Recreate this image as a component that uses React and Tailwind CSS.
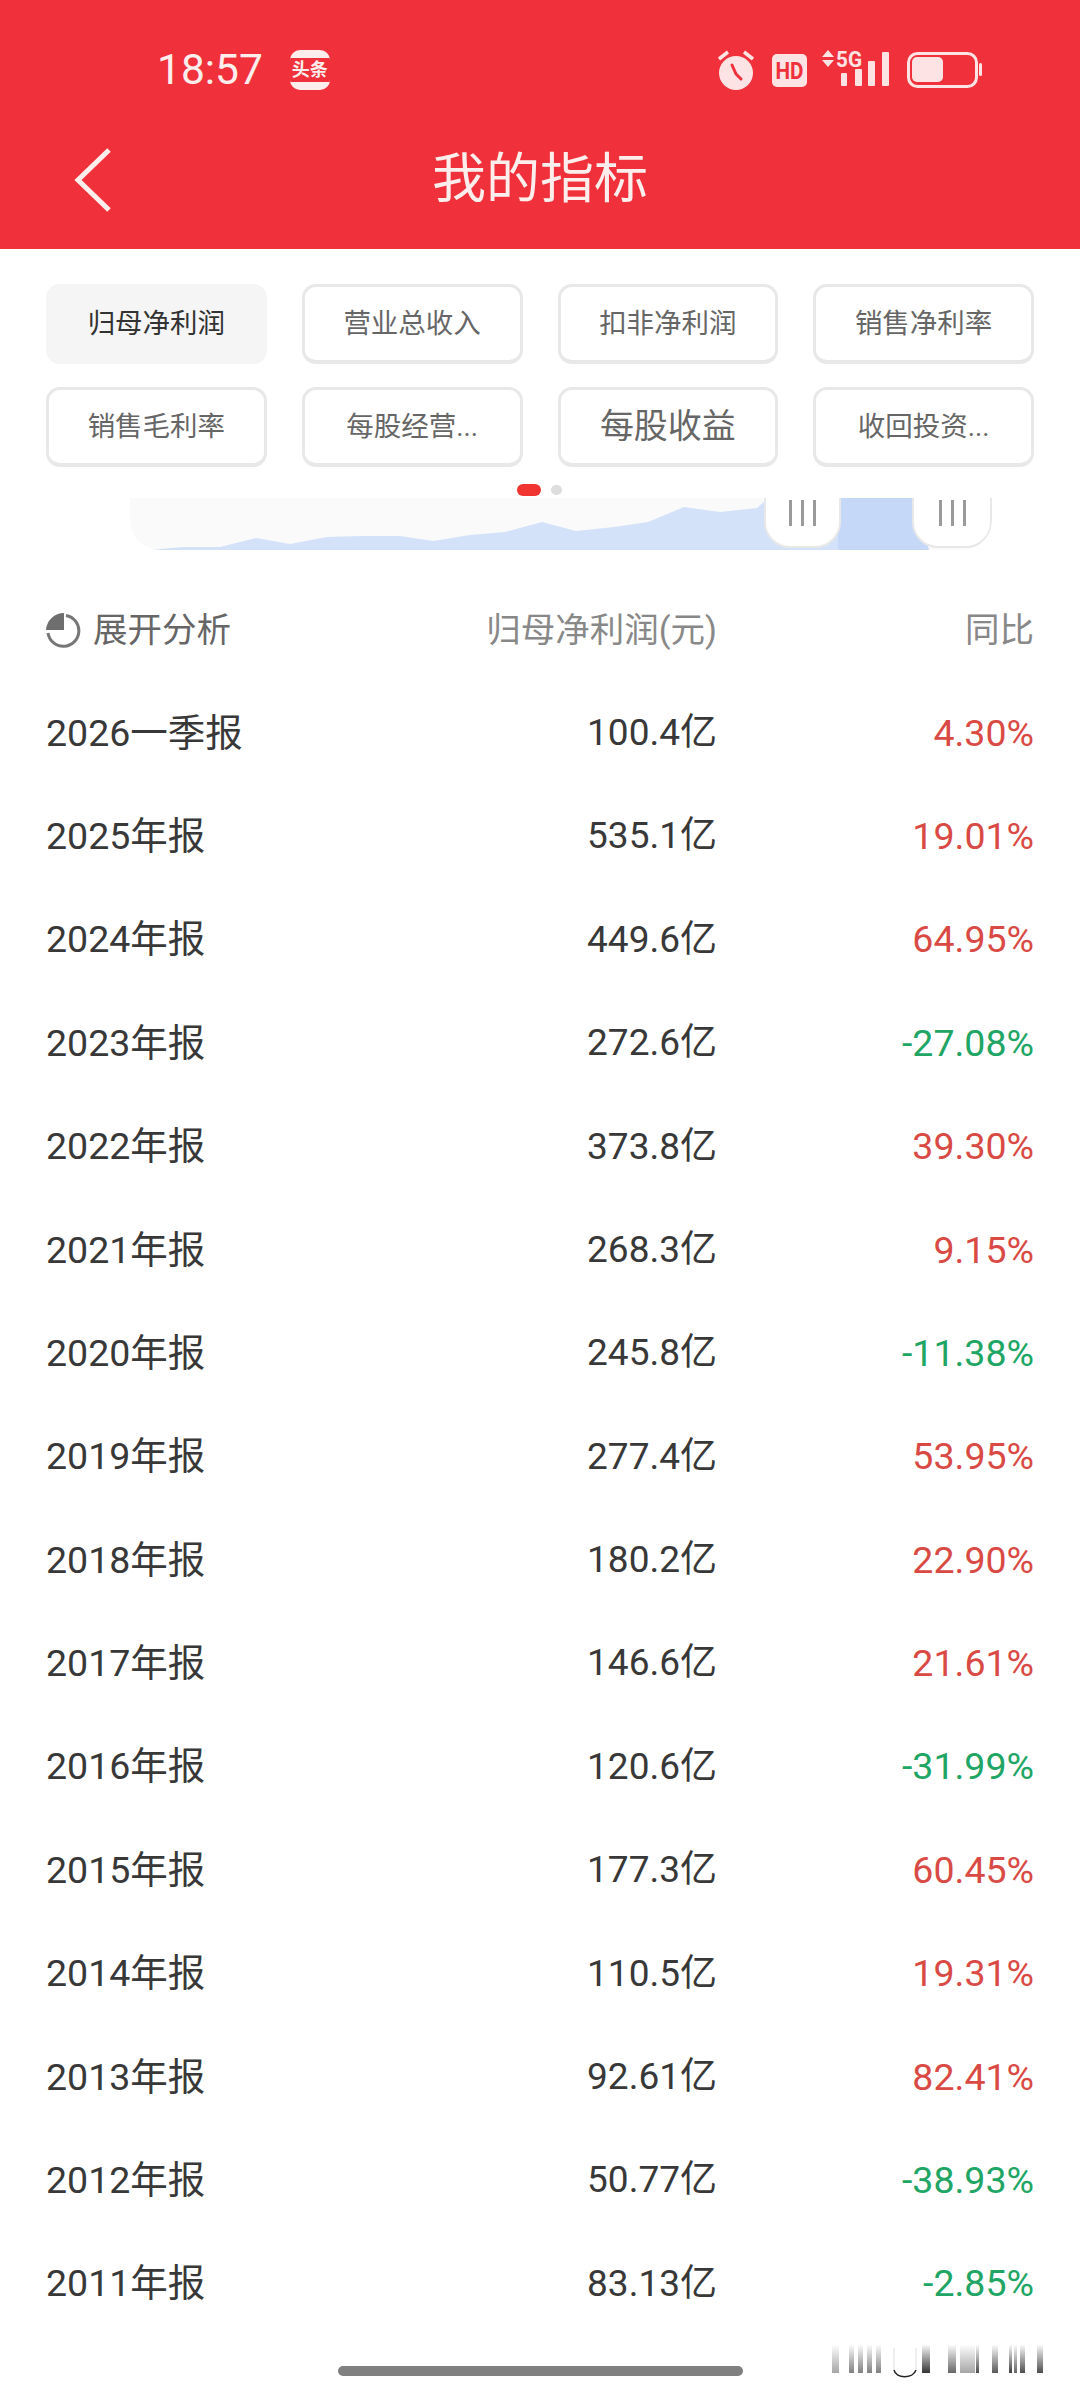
import React from 'react';

const font = { fontFamily: 'Roboto, "Noto Sans CJK SC", sans-serif' };

const chips = [
    { label: '归母净利润', active: true },
    { label: '营业总收入' },
    { label: '扣非净利润' },
    { label: '销售净利率' },
    { label: '销售毛利率' },
    { label: '每股经营...' },
    { label: '每股收益', big: true },
    { label: '收回投资...' },
];

const rows = [
    ['2026一季报', '100.4亿', '4.30%'],
    ['2025年报', '535.1亿', '19.01%'],
    ['2024年报', '449.6亿', '64.95%'],
    ['2023年报', '272.6亿', '-27.08%'],
    ['2022年报', '373.8亿', '39.30%'],
    ['2021年报', '268.3亿', '9.15%'],
    ['2020年报', '245.8亿', '-11.38%'],
    ['2019年报', '277.4亿', '53.95%'],
    ['2018年报', '180.2亿', '22.90%'],
    ['2017年报', '146.6亿', '21.61%'],
    ['2016年报', '120.6亿', '-31.99%'],
    ['2015年报', '177.3亿', '60.45%'],
    ['2014年报', '110.5亿', '19.31%'],
    ['2013年报', '92.61亿', '82.41%'],
    ['2012年报', '50.77亿', '-38.93%'],
    ['2011年报', '83.13亿', '-2.85%'],
];

const watermarkBars = [
    [22, 7, 0.35], [39, 5, 0.5], [48, 5, 0.5], [57, 5, 0.5], [66, 5, 0.5],
    [112, 8, 0.8], [138, 8, 0.6], [150, 15, 0.35], [166, 3, 0.7], [182, 6, 0.65],
    [199, 3, 0.75], [204, 3, 0.6], [210, 5, 0.7], [227, 6, 0.7],
];

const StatusIcons = () => (
    <svg width="268" height="44" viewBox="718 48 268 44" fill="#fde3e3">
        {/* alarm */}
        <circle cx="737" cy="73" r="17" />
        <path d="M733 65 L737 74 L742 79" fill="none" stroke="#f0313b" strokeWidth="3" strokeLinecap="round" />
        <path d="M720 59 L729 52" stroke="#fde3e3" strokeWidth="3.5" />
        <path d="M745 52 L754 59" stroke="#fde3e3" strokeWidth="3.5" />
        {/* HD */}
        <rect x="773" y="54" width="35" height="33" rx="5" />
        <text x="790.5" y="79" textAnchor="middle" fontSize="24" fontWeight="700" fill="#f0313b" fontFamily="Roboto" textLength="28" lengthAdjust="spacingAndGlyphs">HD</text>
        {/* data arrows and 5G */}
        <path d="M829 50 L835 57 L823 57 Z M823 60 L835 60 L829 67 Z" />
        <text x="837" y="67" fontSize="22" fontWeight="700" fontFamily="Roboto" textLength="26" lengthAdjust="spacingAndGlyphs">5G</text>
        {/* signal */}
        <rect x="842" y="73" width="6" height="13" rx="1" />
        <rect x="856" y="69" width="7" height="17" rx="1" />
        <rect x="869" y="61" width="7" height="25" rx="1" />
        <rect x="883" y="52" width="7" height="34" rx="1" />
        {/* battery */}
        <rect x="909.5" y="53.5" width="68" height="33" rx="9" fill="none" stroke="#fde3e3" strokeWidth="3" />
        <rect x="913" y="57" width="31" height="25" rx="5" />
        <rect x="980" y="63" width="3" height="13" rx="1.5" />
    </svg>
);

const Chart = () => (
    <div className="relative mx-[130px] mt-[1px] h-[52px] w-[862px] overflow-hidden rounded-b-[30px] bg-[#fafafa]">
        <svg width="862" height="52" viewBox="130 497 862 52" className="block">
            <polygon
                fill="#d3e2f9"
                points="149,549 183,546 220,546 256,537 290,543 327,536 361,535 400,535 433,540 470,534 505,531 542,521 576,530 614,526 648,521 684,506 720,511 757,507 768,497 840,497 840,549"
            />
            <polygon fill="#c5d8f7" points="838,497 915,497 929,549 838,549" />
        </svg>
        <div className="absolute left-[634px] top-[-20px] flex h-[70px] w-[77px] justify-center gap-[9px] rounded-b-[26px] border-2 border-[#e8e8e8] bg-white pt-[20px]">
            <span className="h-[26px] w-[3px] bg-[#9a9a9a]"></span>
            <span className="h-[26px] w-[3px] bg-[#9a9a9a]"></span>
            <span className="h-[26px] w-[3px] bg-[#9a9a9a]"></span>
        </div>
        <div className="absolute left-[782px] top-[-20px] flex h-[70px] w-[80px] justify-center gap-[9px] rounded-b-[26px] border-2 border-[#e8e8e8] bg-white pt-[20px]">
            <span className="h-[26px] w-[3px] bg-[#9a9a9a]"></span>
            <span className="h-[26px] w-[3px] bg-[#9a9a9a]"></span>
            <span className="h-[26px] w-[3px] bg-[#9a9a9a]"></span>
        </div>
    </div>
);

const App = () => {
    return (
        <div className="relative h-[2400px] w-[1080px] overflow-hidden bg-white" style={font}>
            {/* Red header */}
            <div className="h-[249px] bg-[#f0313b] pt-[40px] text-white">
                <div className="flex h-[60px] items-center pl-[157px]">
                    <span className="text-[42.5px] leading-none text-[#fdeeee]">18:57</span>
                    <div className="ml-[27px] flex h-[40px] w-[40px] flex-col justify-center overflow-hidden rounded-[10px] bg-[#fdeeee]">
                        <div className="flex h-[24px] items-center justify-center whitespace-nowrap bg-[#f0313b] text-[18px] font-bold leading-none text-[#fdeeee]">头条</div>
                    </div>
                    <div className="ml-[387px]">
                        <StatusIcons />
                    </div>
                </div>
                <div className="mt-[40px] grid h-[80px] grid-cols-[1fr_auto_1fr] items-center">
                    <div className="pl-[73px]">
                        <svg width="40" height="66" viewBox="0 0 40 66" fill="none">
                            <path d="M36 3 L5 33 L36 63" stroke="#fdeeee" strokeWidth="5" />
                        </svg>
                    </div>
                    <h1 className="text-[54px] font-normal leading-none text-[#fdeeee]">我的指标</h1>
                    <div></div>
                </div>
            </div>

            {/* Indicator chips */}
            <div className="grid grid-cols-4 gap-x-[35px] gap-y-[23px] px-[46px] pt-[35px]">
                {chips.map((chip) => (
                    <div
                        key={chip.label}
                        className={`flex h-[80px] items-center justify-center whitespace-nowrap rounded-[14px] ${
                            chip.active
                                ? 'bg-[#f5f5f5] text-[27.5px] text-[#333333]'
                                : `border-[3px] border-b-4 border-[#e8e8e8] text-[#666666] ${chip.big ? 'text-[34px]' : 'text-[27.5px]'}`
                        }`}
                    >
                        {chip.label}
                    </div>
                ))}
            </div>

            {/* Pager dots */}
            <div className="mt-[16px] flex h-[14px] items-center justify-center gap-[10px] pr-[1px]">
                <span className="h-[12px] w-[24px] rounded-full bg-[#f0342f]"></span>
                <span className="h-[10px] w-[11px] rounded-full bg-[#dddddd]"></span>
            </div>

            <Chart />

            {/* Table */}
            <div className="px-[46px] pt-[30px]">
                <div className="grid h-[101px] grid-cols-[300px_371px_317px] items-center text-[34.5px] text-[#888888]">
                    <div className="flex items-center gap-[12px] text-[#666666]">
                        <svg width="35" height="35" viewBox="0 0 35 35" fill="none">
                            <path d="M20 2.5 A15.5 15.5 0 1 1 2 20" stroke="#777777" strokeWidth="3" />
                            <path d="M18 0 L18 17 L0 17 A18 18 0 0 1 18 0 Z" fill="#6e6e6e" />
                        </svg>
                        <span>展开分析</span>
                    </div>
                    <div className="text-right">归母净利润(元)</div>
                    <div className="text-right">同比</div>
                </div>
                {rows.map(([period, amount, change]) => (
                    <div key={period} className="grid h-[103.4px] grid-cols-[300px_371px_317px] items-center text-[37.5px] text-[#383838]">
                        <div>{period}</div>
                        <div className="text-right text-[37px]">{amount}</div>
                        <div className={`text-right ${change.startsWith('-') ? 'text-[#20a565]' : 'text-[#d94a45]'}`}>{change}</div>
                    </div>
                ))}
            </div>

            {/* Home indicator */}
            <div className="mx-auto mt-[31px] h-[10px] w-[405px] rounded-[5px] bg-[#808080]"></div>

            {/* Watermark residue over the corner */}
            <svg className="absolute left-[810px] top-[2340px]" width="250" height="44" viewBox="0 0 250 44">
                <defs>
                    <linearGradient id="fade" x1="0" y1="0" x2="0" y2="1">
                        <stop offset="0" stopColor="#000" stopOpacity="0.03" />
                        <stop offset="1" stopColor="#000" stopOpacity="1" />
                    </linearGradient>
                </defs>
                {watermarkBars.map(([x, w, o]) => (
                    <rect key={x} x={x} y="5" width={w} height="28" fill="url(#fade)" opacity={o} />
                ))}
                <path d="M84 30 C86 39 103 39 106 30" fill="none" stroke="#222222" strokeWidth="1.5" />
                <path d="M84 8 L84 30 M106 8 L106 30" stroke="#dddddd" strokeWidth="1" />
            </svg>
        </div>
    );
};

export default App;
